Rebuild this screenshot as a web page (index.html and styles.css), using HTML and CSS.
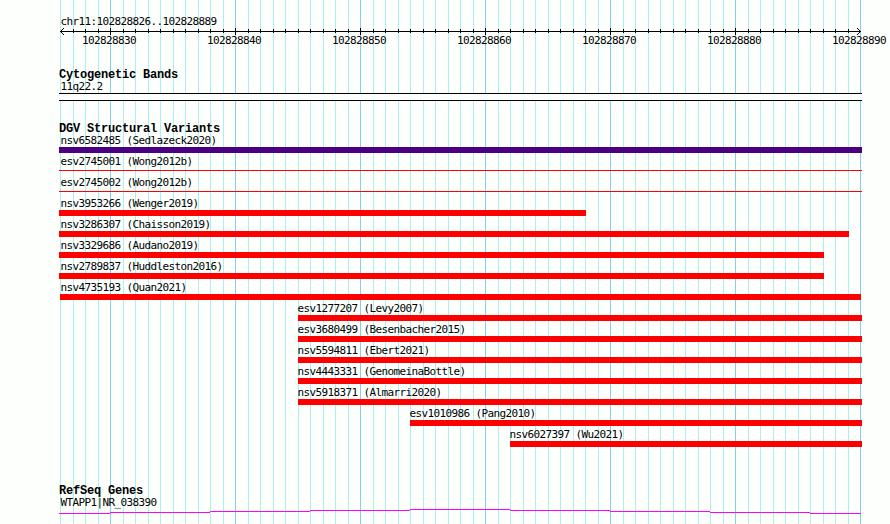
FILE: index.html
```html
<!DOCTYPE html>
<html lang="en">
<head>
  <meta charset="UTF-8">
  <title>chr11:102828826..102828889</title>
  <link rel="stylesheet" href="styles.css">
</head>
<body>
  <main class="browser">
    <section class="ruler">
      <div class="label">chr11:102828826..102828889</div>
      <svg class="axis" width="803" height="7" shape-rendering="crispEdges">
        <defs>
          <pattern id="ticks" x="1" width="25" height="7" patternUnits="userSpaceOnUse">
            <path d="M0 1h1v4h-1z M13 1h1v4h-1z"/>
          </pattern>
          <pattern id="majors" x="51" width="125" height="7" patternUnits="userSpaceOnUse">
            <path d="M0 0h1v7h-1z"/>
          </pattern>
        </defs>
        <path d="M1 3h801v1h-801z"/>
        <rect x="13" width="780" height="7" fill="url(#ticks)"/>
        <rect x="13" width="780" height="7" fill="url(#majors)"/>
        <path d="M2 2h1v1h-1z M3 1h1v1h-1z M4 0h1v1h-1z M2 4h1v1h-1z M3 5h1v1h-1z M4 6h1v1h-1z"/>
        <path d="M800 2h1v1h-1z M799 1h1v1h-1z M798 0h1v1h-1z M800 4h1v1h-1z M799 5h1v1h-1z M798 6h1v1h-1z"/>
      </svg>
      <div class="positions">
        <span>102828830</span>
        <span>102828840</span>
        <span>102828850</span>
        <span>102828860</span>
        <span>102828870</span>
        <span>102828880</span>
        <span>102828890</span>
      </div>
    </section>

    <section class="track bands">
      <h2>Cytogenetic Bands</h2>
      <div class="label">11q22.2</div>
      <div class="band"></div>
    </section>

    <section class="track variants">
      <h2>DGV Structural Variants</h2>
      <div class="row"><div class="label">nsv6582485 (Sedlazeck2020)</div><div class="bar complex"></div></div>
      <div class="row"><div class="label">esv2745001 (Wong2012b)</div><div class="bar thin"></div></div>
      <div class="row"><div class="label">esv2745002 (Wong2012b)</div><div class="bar thin"></div></div>
      <div class="row to-868"><div class="label">nsv3953266 (Wenger2019)</div><div class="bar"></div></div>
      <div class="row to-889"><div class="label">nsv3286307 (Chaisson2019)</div><div class="bar"></div></div>
      <div class="row to-887"><div class="label">nsv3329686 (Audano2019)</div><div class="bar"></div></div>
      <div class="row to-887"><div class="label">nsv2789837 (Huddleston2016)</div><div class="bar"></div></div>
      <div class="row exact"><div class="label">nsv4735193 (Quan2021)</div><div class="bar"></div></div>
      <div class="row from-845"><div class="label">esv1277207 (Levy2007)</div><div class="bar"></div></div>
      <div class="row from-845"><div class="label">esv3680499 (Besenbacher2015)</div><div class="bar"></div></div>
      <div class="row from-845"><div class="label">nsv5594811 (Ebert2021)</div><div class="bar"></div></div>
      <div class="row from-845"><div class="label">nsv4443331 (GenomeinaBottle)</div><div class="bar"></div></div>
      <div class="row from-845"><div class="label">nsv5918371 (Almarri2020)</div><div class="bar"></div></div>
      <div class="row from-854"><div class="label">esv1010986 (Pang2010)</div><div class="bar"></div></div>
      <div class="row from-862"><div class="label">nsv6027397 (Wu2021)</div><div class="bar"></div></div>
    </section>

    <section class="track genes">
      <h2>RefSeq Genes</h2>
      <div class="label">WTAPP1|NR_038390</div>
      <svg class="gene" width="803" height="5" shape-rendering="crispEdges">
        <path d="M0 4h51v1h-51z M51 3h100v1h-100z M151 2h100v1h-100z M251 1h100v1h-100z M351 0h100v1h-100z M451 1h100v1h-100z M551 2h100v1h-100z M651 3h100v1h-100z M751 4h51v1h-51z"/>
      </svg>
    </section>
  </main>
</body>
</html>
```
FILE: styles.css
```css
body { margin: 0; background: #fdfffc; color: #000; overflow: hidden; }

/* one line every 12.5px, a darker one every ten bases */
.browser {
  box-sizing: border-box;
  width: 801px;
  height: 524px;
  margin-left: 60px;
  padding-top: 15px;
  background-image:
    linear-gradient(90deg, #87ceeb 1px, transparent 1px),
    linear-gradient(90deg, #afeeee 1px, transparent 1px, transparent 13px, #afeeee 13px, #afeeee 14px, transparent 14px);
  background-size: 125px 100%, 25px 100%;
  background-position: 50px 0, 0 0;
}

.label, .positions {
  font: 11px/13px "DejaVu Sans Mono", monospace;
  letter-spacing: -0.622px;
  white-space: nowrap;
  height: 13px;
}
.label { text-indent: 0.4px; }

h2 {
  margin: 0 0 0 -1px;
  padding-top: 2px;
  height: 10px;
  font: bold 12px/11px "Liberation Mono", monospace;
  letter-spacing: -0.2px;
  white-space: nowrap;
}

.ruler { height: 53px; }
.axis { display: block; margin-left: -1px; }
.positions { display: flex; gap: 71px; margin: -1px 0 0 22px; }
.positions span { flex: 0 0 54px; min-width: 0; }

.bands { height: 54px; }
.band { width: 803px; height: 6px; margin-left: -1px; background: #fdfffc; border: solid #000; border-width: 1px 0; }

.variants { height: 362px; }
.row { width: 803px; height: 21px; margin-left: -1px; }
.row .label { margin-left: 1px; }
.bar { height: 6px; background: #f00; }
.bar.complex { background: #4b0082; }
.bar.thin { height: 1px; margin-top: 2px; }

/* rows that do not fill the whole region */
.to-868 { width: 527px; }
.to-887 { width: 765px; }
.to-889 { width: 790px; }
.exact { width: 801px; margin-left: 0; }
.exact .label { margin-left: 0; }
.from-845 { width: 564px; margin-left: 238px; }
.from-854 { width: 452px; margin-left: 350px; }
.from-862 { width: 352px; margin-left: 450px; }
.from-845 .label, .from-854 .label, .from-862 .label { margin-left: -1px; }

.gene { display: block; margin-left: -1px; fill: #f0f; }
```
